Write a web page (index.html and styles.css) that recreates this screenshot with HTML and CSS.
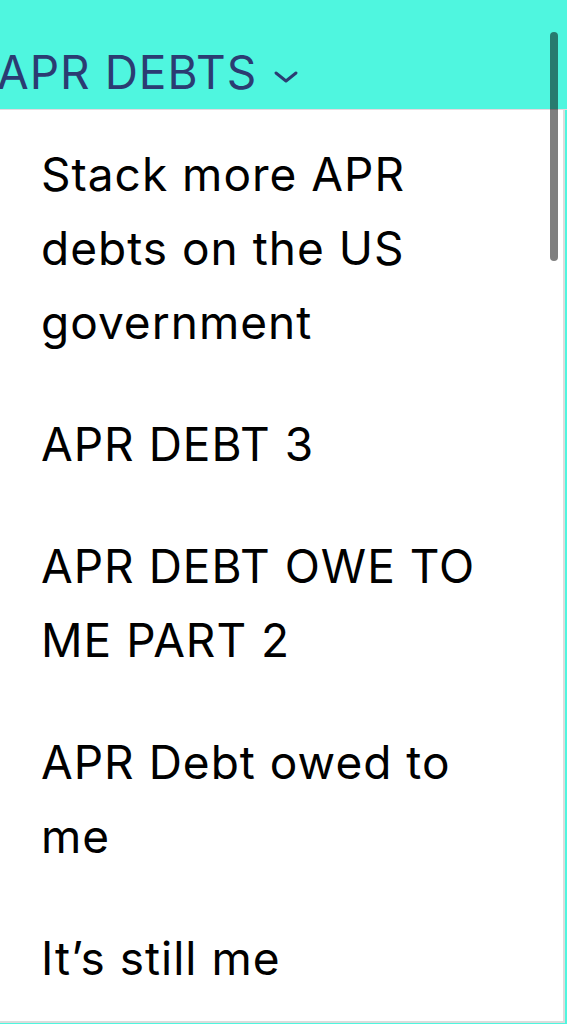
FILE: index.html
```html
<!DOCTYPE html>
<html lang="en">

<head>
    <meta charset="UTF-8">
    <meta name="viewport" content="width=device-width, initial-scale=1.0">
    <title>APR Debts</title>
    <link rel="stylesheet" href="styles.css">
</head>

<body>

    <header class="topbar">
        <button type="button" class="menu-toggle">
            <span class="menu-title">APR DEBTS</span>
            <svg class="chevron" width="26" height="14" viewBox="0 0 26 14">
                <path d="M3 3 L13 11 L23 3" fill="none" stroke="currentColor" stroke-width="3" stroke-linecap="round" stroke-linejoin="round"/>
            </svg>
        </button>
    </header>

    <nav class="dropdown">
        <ul class="dropdown-list">
            <li class="dropdown-item">Stack more APR debts on the US government</li>
            <li class="dropdown-item">APR DEBT 3</li>
            <li class="dropdown-item">APR DEBT OWE TO ME PART 2</li>
            <li class="dropdown-item">APR Debt owed to me</li>
            <li class="dropdown-item">It’s still me</li>
        </ul>
    </nav>

    <div class="scroll-thumb"></div>

</body>

</html>
```

FILE: styles.css
```css
body {
    margin: 0;
    background-color: #4ff6df;
    font-family: Inter, "Noto Sans", sans-serif;
    overflow: hidden;
}

.topbar {
    height: 109px;
    border-bottom: 1px solid #e6d9df;
}

.menu-toggle {
    display: flex;
    align-items: center;
    gap: 16px;
    margin-left: -3px;
    padding: 44px 0 0;
    background: none;
    border: none;
    color: #2b3c72;
    font-family: inherit;
    font-size: 46px;
    letter-spacing: 1px;
    line-height: 56px;
}

.chevron {
    margin-top: 10px;
}

.dropdown {
    width: 563px;
    background-color: #ffffff;
    border-right: 2px solid #dcdcdc;
    border-bottom: 2px solid #dcdcdc;
}

.dropdown-list {
    list-style: none;
    margin: 0;
    padding: 3px 70px 2px 41px;
}

.dropdown-item {
    padding: 24px 0;
    font-size: 46px;
    letter-spacing: 1px;
    line-height: 74px;
    color: #000000;
}

.scroll-thumb {
    position: absolute;
    top: 32px;
    left: 550px;
    width: 8px;
    height: 229px;
    border-radius: 4px;
    background-color: rgba(0, 0, 0, 0.5);
}
```
